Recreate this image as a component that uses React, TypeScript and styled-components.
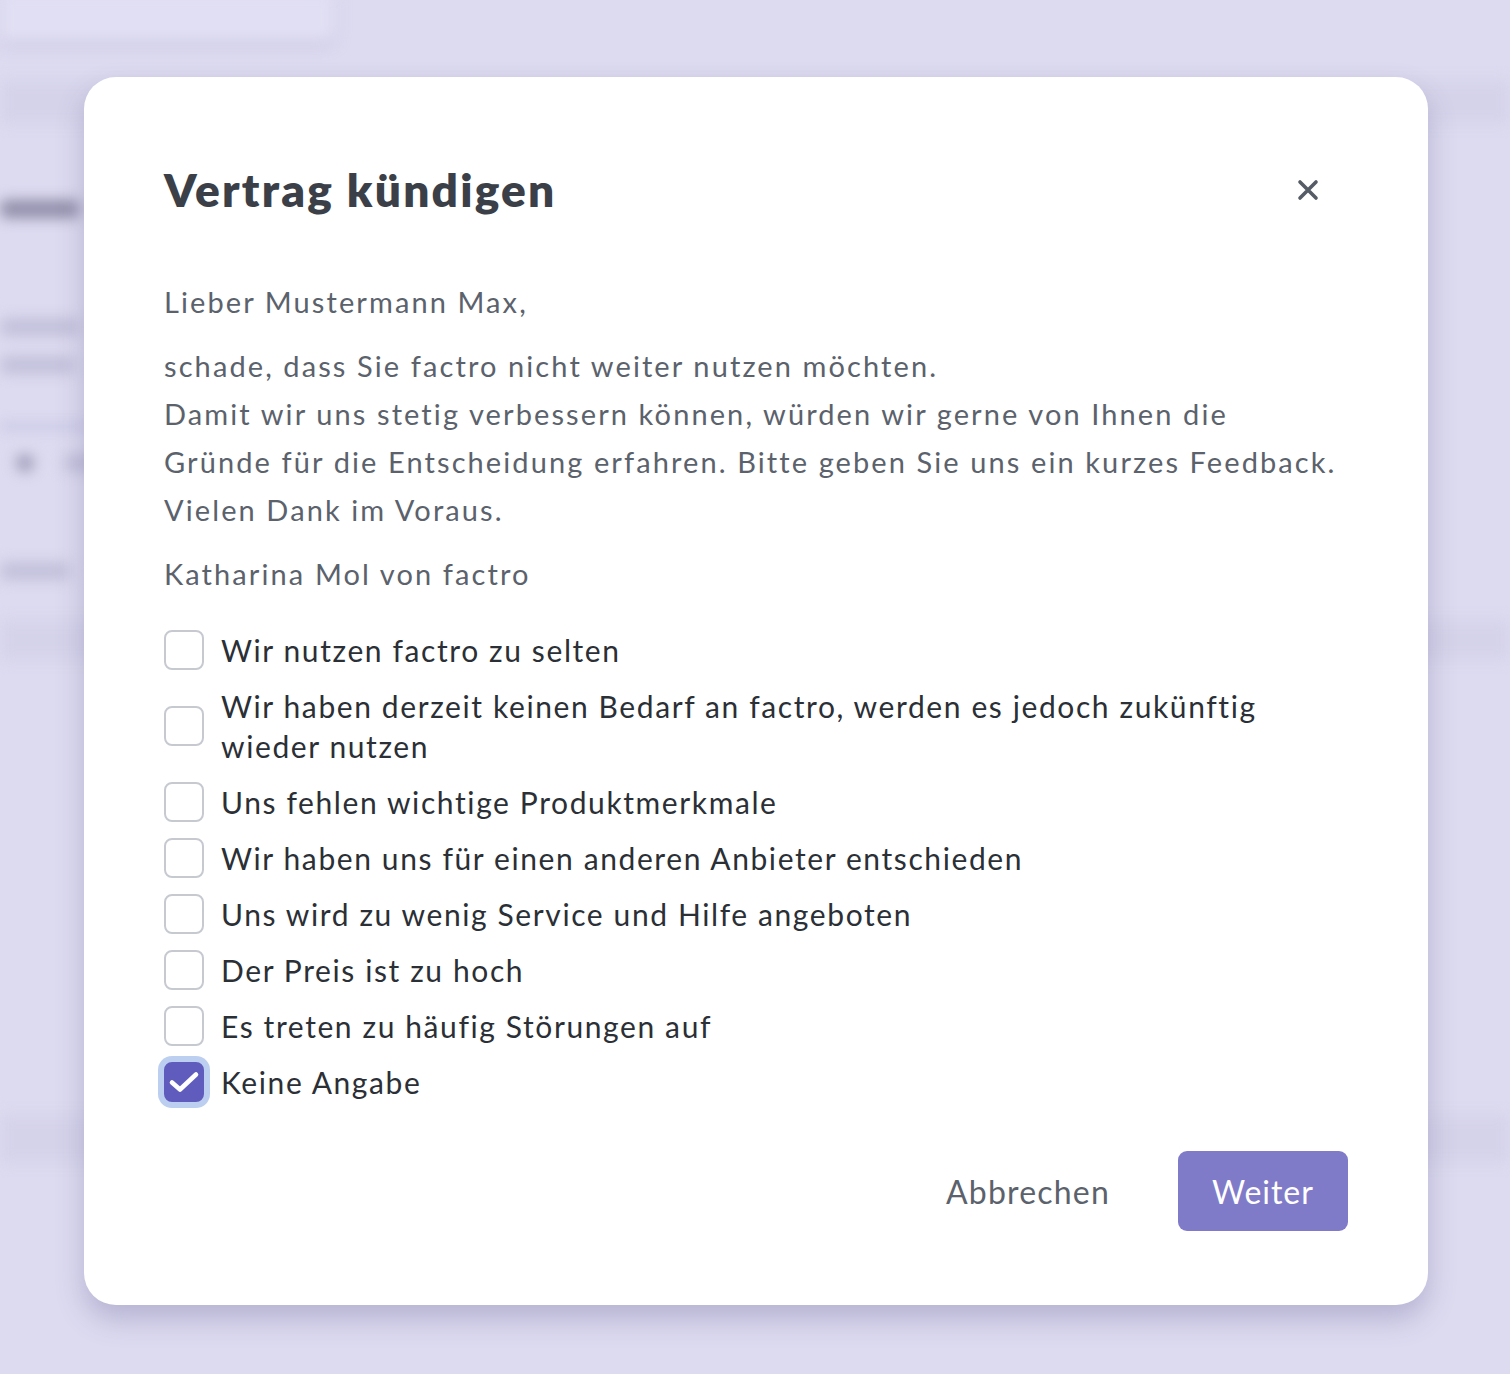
import styled, { createGlobalStyle } from "styled-components";

const reasons = [
  ["Wir nutzen factro zu selten"],
  ["Wir haben derzeit keinen Bedarf an factro, werden es jedoch zukünftig", "wieder nutzen"],
  ["Uns fehlen wichtige Produktmerkmale"],
  ["Wir haben uns für einen anderen Anbieter entschieden"],
  ["Uns wird zu wenig Service und Hilfe angeboten"],
  ["Der Preis ist zu hoch"],
  ["Es treten zu häufig Störungen auf"],
  ["Keine Angabe"],
];

const checked = 7;

const App = () => {
  return (
    <>
      <GlobalStyle />
      <Page>
        <Backdrop aria-hidden>
          <TopCard />
          <Band $top={38} $height={44} />
          <BlurText $top={76} $width={80} $dark />
          <BlurText $top={100} $width={80} />
          <BlurText $top={20} $width={75} />
          <BlurLine $top={50} />
          <DotRow $top={25}>
            <Dot />
            <BlurText $top={0} $width={40} />
          </DotRow>
          <BlurText $top={90} $width={70} />
          <Band $top={40} $height={40} />
          <Band $top={455} $height={48} />
        </Backdrop>

        <Modal>
          <Header>
            <Title>Vertrag kündigen</Title>
            <Close aria-label="Schließen">
              <svg width="22" height="22" viewBox="0 0 22 22">
                <path
                  d="M3 3 L19 19 M19 3 L3 19"
                  stroke="#555c66"
                  strokeWidth="3.6"
                  strokeLinecap="round"
                />
              </svg>
            </Close>
          </Header>

          <Text>Lieber Mustermann Max,</Text>
          <Text>
            schade, dass Sie factro nicht weiter nutzen möchten.
            <br />
            Damit wir uns stetig verbessern können, würden wir gerne von Ihnen die
            <br />
            Gründe für die Entscheidung erfahren. Bitte geben Sie uns ein kurzes Feedback.
            <br />
            Vielen Dank im Voraus.
          </Text>
          <Text>Katharina Mol von factro</Text>

          <List>
            {reasons.map((lines, i) => (
              <Option key={i}>
                <Box $checked={i === checked}>
                  {i === checked && (
                    <svg width="36" height="36" viewBox="2 2 36 36">
                      <path
                        d="M8 20.5 L16 27.5 L32 12.5"
                        fill="none"
                        stroke="#fff"
                        strokeWidth="4.6"
                        strokeLinecap="round"
                        strokeLinejoin="round"
                      />
                    </svg>
                  )}
                </Box>
                <Label>
                  {lines.map((l, j) => (
                    <span key={j}>
                      {l}
                      {j < lines.length - 1 && <br />}
                    </span>
                  ))}
                </Label>
              </Option>
            ))}
          </List>

          <Footer>
            <Cancel>Abbrechen</Cancel>
            <Primary>Weiter</Primary>
          </Footer>
        </Modal>
      </Page>
    </>
  );
};

export default App;

const GlobalStyle = createGlobalStyle`
  html, body {
    margin: 0;
    padding: 0;
    background: #dddbf0;
  }
  body {
    font-family: Lato, "Noto Sans", sans-serif;
  }
`;

const Page = styled.div`
  position: relative;
  width: 1510px;
  height: 1374px;
  overflow: hidden;
  background: #dddbf0;
`;

const Backdrop = styled.div`
  display: flex;
  flex-direction: column;
  filter: blur(7px);
`;

const TopCard = styled.div`
  width: 335px;
  height: 48px;
  margin-top: -6px;
  background: #e1dff3;
  border-radius: 0 0 10px 0;
  box-shadow: 0 3px 6px rgba(120, 115, 170, 0.35);
`;

const Band = styled.div<{ $top: number; $height: number }>`
  margin-top: ${(p) => p.$top}px;
  height: ${(p) => p.$height}px;
  background: #d5d3ea;
`;

const BlurText = styled.div<{ $top: number; $width: number; $dark?: boolean }>`
  margin-top: ${(p) => p.$top}px;
  width: ${(p) => p.$width}px;
  height: 18px;
  border-radius: 6px;
  background: ${(p) => (p.$dark ? "#8f8da8" : "#c2c0da")};
`;

const BlurLine = styled.div<{ $top: number }>`
  margin-top: ${(p) => p.$top}px;
  width: 90px;
  height: 5px;
  background: #bdbce0;
`;

const DotRow = styled.div<{ $top: number }>`
  margin-top: ${(p) => p.$top}px;
  display: flex;
  align-items: center;
  gap: 30px;
  padding-left: 16px;
`;

const Dot = styled.div`
  width: 18px;
  height: 18px;
  border-radius: 50%;
  background: #9d9bb8;
`;

const Modal = styled.div`
  position: absolute;
  left: 84px;
  top: 77px;
  width: 1344px;
  height: 1228px;
  box-sizing: border-box;
  padding: 85px 80px 0;
  background: #fff;
  border-radius: 32px;
  box-shadow: 0 14px 28px rgba(90, 85, 140, 0.3);
  display: flex;
  flex-direction: column;
`;

const Header = styled.div`
  display: flex;
  align-items: center;
  justify-content: space-between;
  height: 56px;
  margin-bottom: 60px;
`;

const Title = styled.h2`
  margin: 0;
  font-size: 46px;
  font-weight: 800;
  line-height: 56px;
  letter-spacing: 2.2px;
  color: #3b4048;
`;

const Close = styled.button`
  border: none;
  background: none;
  padding: 0;
  margin-right: 29px;
  display: flex;
  cursor: pointer;
`;

const Text = styled.p`
  margin: 0 0 16px;
  font-size: 29px;
  line-height: 48px;
  letter-spacing: 2.1px;
  color: #5b626c;
  white-space: nowrap;
`;

const List = styled.div`
  margin-top: 16px;
  display: flex;
  flex-direction: column;
  gap: 16px;
`;

const Option = styled.label`
  display: flex;
  align-items: center;
  gap: 17px;
  cursor: pointer;
`;

const Box = styled.span<{ $checked?: boolean }>`
  flex: none;
  width: 40px;
  height: 40px;
  box-sizing: border-box;
  border-radius: 8px;
  display: flex;
  align-items: center;
  justify-content: center;
  border: 2px solid ${(p) => (p.$checked ? "#605cbd" : "#c6cad0")};
  background: ${(p) => (p.$checked ? "#605cbd" : "#fff")};
  box-shadow: ${(p) => (p.$checked ? "0 0 0 6px #bccff0" : "none")};
`;

const Label = styled.span`
  font-size: 30px;
  line-height: 40px;
  letter-spacing: 1.6px;
  color: #2b2f36;
  white-space: nowrap;
`;

const Footer = styled.div`
  margin-top: 49px;
  display: flex;
  justify-content: flex-end;
  align-items: center;
  gap: 36px;
`;

const Cancel = styled.button`
  border: none;
  background: none;
  padding: 0 32px;
  height: 80px;
  font-family: inherit;
  font-size: 32px;
  letter-spacing: 1.2px;
  color: #5b626c;
  cursor: pointer;
`;

const Primary = styled.button`
  border: none;
  width: 170px;
  height: 80px;
  border-radius: 9px;
  background: #807bc9;
  color: #fff;
  font-family: inherit;
  font-size: 32px;
  letter-spacing: 1px;
  cursor: pointer;
`;
